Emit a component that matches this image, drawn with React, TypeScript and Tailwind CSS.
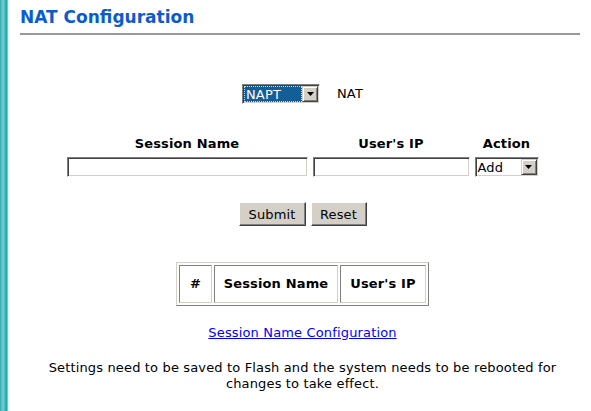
import React from "react";

function Arrow() {
  return (
    <div className="flex h-full w-[16px] shrink-0 items-center justify-center border border-t-[#d4d0c8] border-l-[#d4d0c8] border-r-[#404040] border-b-[#404040] bg-[#d4d0c8] shadow-[inset_1px_1px_0_#ffffff,inset_-1px_-1px_0_#808080]">
      <svg width="7" height="4" viewBox="0 0 7 4">
        <path d="M0 0h7L3.5 4z" fill="#000" />
      </svg>
    </div>
  );
}

const inset =
  "border border-t-[#808080] border-l-[#808080] border-r-white border-b-white shadow-[inset_1px_1px_0_#404040,inset_-1px_-1px_0_#d4d0c8]";

const btn =
  "flex h-[24px] items-center justify-center border border-t-white border-l-white border-r-[#404040] border-b-[#404040] bg-[#d4d0c8] shadow-[inset_-1px_-1px_0_#808080] text-[13px] leading-none text-black";

export default function App() {
  return (
    <div className="flex min-h-[411px] w-[591px] bg-white font-['DejaVu_Sans',Verdana,sans-serif] text-[13px] tracking-[0.15px] text-black">
      <div className="w-[9px] shrink-0 bg-[linear-gradient(to_right,#34abaf_0px,#5cc3c6_2px,#7ad3d4_3px,#40b4b8_5px,#22a2a6_7px,#c6eeef_8px,#ffffff_9px)]" />
      <div className="flex-1 pl-[11px] pr-[6px]">
        <h1 className="pt-[8px] text-[17px] font-bold leading-[19px] tracking-normal text-[#0b5bd0]">
          NAT Configuration
        </h1>
        <div className="mr-[5px] mt-[6px] h-[2px] bg-[#999999]" />

        <div className="mt-[49px] flex items-center justify-center gap-[17px]">
          <div className={`flex h-[20px] w-[78px] items-stretch bg-white p-[1px] ${inset}`}>
            <div className="flex flex-1 items-center border border-dotted border-[#e8d890] bg-[#135e96] pl-[1px] text-[13px] leading-none text-white">
              NAPT
            </div>
            <Arrow />
          </div>
          <span className="leading-[16px]">NAT</span>
        </div>

        <div className="mt-[32px] grid grid-cols-[241px_157px_64px] justify-center gap-x-[5px] gap-y-[5px]">
          <div className="text-center font-bold leading-[16px]">Session Name</div>
          <div className="text-center font-bold leading-[16px]">User&apos;s IP</div>
          <div className="text-center font-bold leading-[16px]">Action</div>
          <div className={`h-[20px] bg-white ${inset}`} />
          <div className={`h-[20px] bg-white ${inset}`} />
          <div className={`flex h-[20px] items-stretch bg-white p-[1px] ${inset}`}>
            <div className="flex flex-1 items-center pl-[1px] text-[13px] leading-none">Add</div>
            <Arrow />
          </div>
        </div>

        <div className="mt-[25px] flex justify-center gap-[5px]">
          <div className={`${btn} w-[67px]`}>Submit</div>
          <div className={`${btn} w-[56px]`}>Reset</div>
        </div>

        <div className="mt-[36px] flex justify-center">
          <table className="border-separate border-spacing-[2px] border border-t-[#d4d0c8] border-l-[#d4d0c8] border-r-[#808080] border-b-[#808080]">
            <tbody>
              <tr>
                {[
                  ["#", "w-[33px]"],
                  ["Session Name", "w-[124px]"],
                  ["User's IP", "w-[86px]"],
                ].map(([t, w]) => (
                  <td
                    key={t}
                    className={`${w} h-[38px] border border-t-[#808080] border-l-[#808080] border-r-[#d4d0c8] border-b-[#d4d0c8] p-0 text-center align-middle font-bold leading-[16px]`}
                  >
                    {t}
                  </td>
                ))}
              </tr>
            </tbody>
          </table>
        </div>

        <div className="mt-[19px] text-center leading-[15px]">
          <a href="#" className="text-[#0000ff] underline">
            Session Name Configuration
          </a>
        </div>

        <p className="mt-[20px] text-center leading-[16px]">
          Settings need to be saved to Flash and the system needs to be rebooted for
          <br />
          changes to take effect.
        </p>
      </div>
    </div>
  );
}
